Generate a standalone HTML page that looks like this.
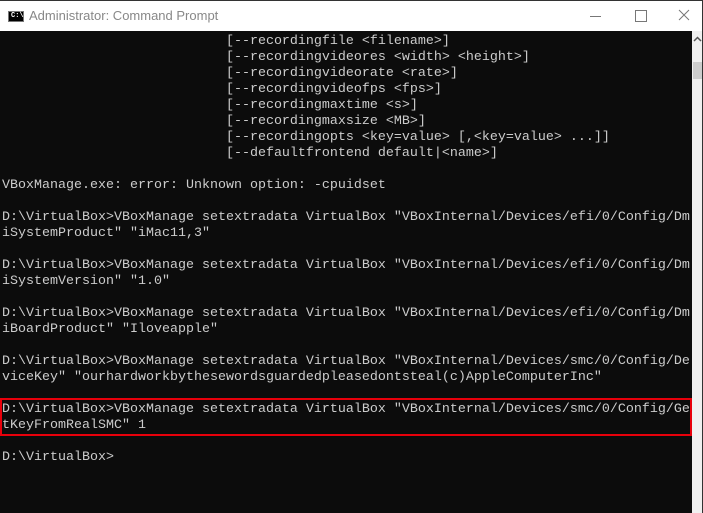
<!DOCTYPE html>
<html><head><style>
html,body{margin:0;padding:0;width:703px;height:513px;overflow:hidden;background:#0c0c0c;}
.title{position:absolute;left:0;top:0;width:703px;height:31px;background:#fff;border-top:1px solid #333;box-sizing:border-box;}
.title .t{position:absolute;left:29px;top:7px;font:13px "Liberation Sans",sans-serif;color:#888;}
.icon{position:absolute;left:8px;top:10px;width:16px;height:11px;background:#000;border:1px solid #777;box-sizing:border-box;}
.icon span{position:absolute;left:2px;top:0;font:bold 7px "Liberation Mono",monospace;color:#fff;line-height:9px;}
.min{position:absolute;left:590px;top:15px;width:11px;height:1px;background:#777;}
.max{position:absolute;left:635px;top:9px;width:10px;height:10px;border:1px solid #777;}
.cls{position:absolute;left:678px;top:8px;}
.term{position:absolute;left:2px;top:34px;margin:0;font:13.33px/16px "Liberation Mono",monospace;color:#cccccc;white-space:pre;}
.sb{position:absolute;left:692px;top:31px;width:10px;height:482px;background:#f0f0f0;}
.thumb{position:absolute;left:693px;top:62px;width:9px;height:17px;background:#cdcdcd;}
.edge{position:absolute;left:702px;top:0;width:1px;height:513px;background:#333;}
.box{position:absolute;left:0;top:398px;width:692px;height:38px;border:2px solid #e8000b;box-sizing:border-box;}
</style></head><body>
<div class="title"><div class="icon"><span>C:\</span></div><div class="t">Administrator: Command Prompt</div>
<div class="min"></div><div class="max"></div>
<svg class="cls" width="12" height="12"><path d="M1 1L11 11M11 1L1 11" stroke="#777" stroke-width="1"/></svg></div>
<pre class="term">                            [--recordingfile &lt;filename&gt;]
                            [--recordingvideores &lt;width&gt; &lt;height&gt;]
                            [--recordingvideorate &lt;rate&gt;]
                            [--recordingvideofps &lt;fps&gt;]
                            [--recordingmaxtime &lt;s&gt;]
                            [--recordingmaxsize &lt;MB&gt;]
                            [--recordingopts &lt;key=value&gt; [,&lt;key=value&gt; ...]]
                            [--defaultfrontend default|&lt;name&gt;]

VBoxManage.exe: error: Unknown option: -cpuidset

D:\VirtualBox&gt;VBoxManage setextradata VirtualBox "VBoxInternal/Devices/efi/0/Config/Dm
iSystemProduct" "iMac11,3"

D:\VirtualBox&gt;VBoxManage setextradata VirtualBox "VBoxInternal/Devices/efi/0/Config/Dm
iSystemVersion" "1.0"

D:\VirtualBox&gt;VBoxManage setextradata VirtualBox "VBoxInternal/Devices/efi/0/Config/Dm
iBoardProduct" "Iloveapple"

D:\VirtualBox&gt;VBoxManage setextradata VirtualBox "VBoxInternal/Devices/smc/0/Config/De
viceKey" "ourhardworkbythesewordsguardedpleasedontsteal(c)AppleComputerInc"

D:\VirtualBox&gt;VBoxManage setextradata VirtualBox "VBoxInternal/Devices/smc/0/Config/Ge
tKeyFromRealSMC" 1

D:\VirtualBox&gt;</pre>
<div class="box"></div>
<div class="sb"></div><div class="thumb"></div>
<svg style="position:absolute;left:693px;top:36px" width="9" height="6"><path d="M1 5L4.5 1.5L8 5" stroke="#555" stroke-width="1.5" fill="none"/></svg>
<div class="edge"></div>
</body></html>
